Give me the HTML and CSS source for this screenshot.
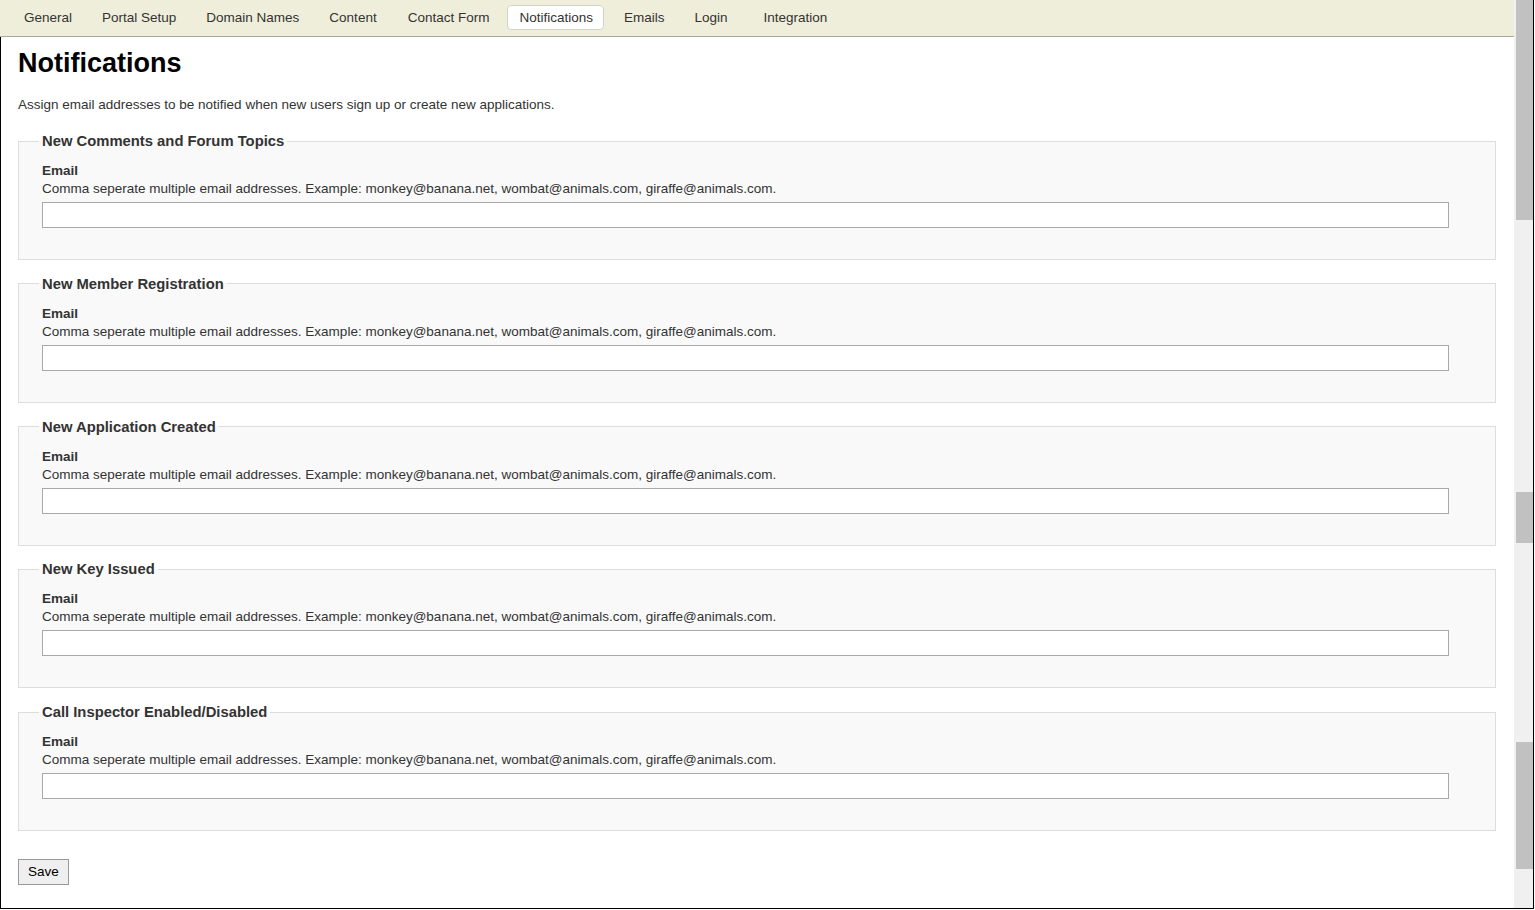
FILE: index.html
```html
<!DOCTYPE html>
<html lang="en">
<head>
<meta charset="utf-8">
<title>Notifications</title>
<link rel="stylesheet" href="styles.css">
</head>
<body>
<div class="frame">
  <div class="main">
    <nav class="tabbar">
      <ul class="tabs">
        <li class="tab">General</li>
        <li class="tab">Portal Setup</li>
        <li class="tab">Domain Names</li>
        <li class="tab">Content</li>
        <li class="tab tab-contact">Contact Form</li>
        <li class="tab tab-active">Notifications</li>
        <li class="tab">Emails</li>
        <li class="tab tab-login">Login</li>
        <li class="tab">Integration</li>
      </ul>
    </nav>
    <section class="content">
      <h1 class="title">Notifications</h1>
      <p class="intro">Assign email addresses to be notified when new users sign up or create new applications.</p>
      <form class="form">
        <fieldset class="group">
          <legend class="legend">New Comments and Forum Topics</legend>
          <label class="label" for="e1">Email</label>
          <div class="help">Comma seperate multiple email addresses. Example: monkey@banana.net, wombat@animals.com, giraffe@animals.com.</div>
          <input class="field" id="e1" type="text">
        </fieldset>
        <fieldset class="group">
          <legend class="legend">New Member Registration</legend>
          <label class="label" for="e2">Email</label>
          <div class="help">Comma seperate multiple email addresses. Example: monkey@banana.net, wombat@animals.com, giraffe@animals.com.</div>
          <input class="field" id="e2" type="text">
        </fieldset>
        <fieldset class="group">
          <legend class="legend">New Application Created</legend>
          <label class="label" for="e3">Email</label>
          <div class="help">Comma seperate multiple email addresses. Example: monkey@banana.net, wombat@animals.com, giraffe@animals.com.</div>
          <input class="field" id="e3" type="text">
        </fieldset>
        <fieldset class="group">
          <legend class="legend">New Key Issued</legend>
          <label class="label" for="e4">Email</label>
          <div class="help">Comma seperate multiple email addresses. Example: monkey@banana.net, wombat@animals.com, giraffe@animals.com.</div>
          <input class="field" id="e4" type="text">
        </fieldset>
        <fieldset class="group">
          <legend class="legend">Call Inspector Enabled/Disabled</legend>
          <label class="label" for="e5">Email</label>
          <div class="help">Comma seperate multiple email addresses. Example: monkey@banana.net, wombat@animals.com, giraffe@animals.com.</div>
          <input class="field" id="e5" type="text">
        </fieldset>
        <button class="save" type="button">Save</button>
      </form>
    </section>
  </div>
  <div class="scrollbar">
    <div class="thumb thumb-1"></div>
    <div class="thumb thumb-2"></div>
    <div class="thumb thumb-3"></div>
  </div>
</div>
</body>
</html>
```
FILE: styles.css
```css
html, body {
  margin: 0;
  padding: 0;
  background: #ffffff;
}

body {
  font-family: "Liberation Sans", Arial, sans-serif;
  color: #333333;
  overflow: hidden;
}

.frame {
  display: flex;
  width: 1534px;
  height: 909px;
  box-sizing: border-box;
  border-right: 1px solid #000000;
  border-bottom: 1px solid #000000;
}

.main {
  width: 1514px;
  display: flex;
  flex-direction: column;
}

.tabbar {
  height: 36px;
  background: #efeedb;
  border-bottom: 1px solid #a9a9a0;
  flex: none;
}

.tabs {
  list-style: none;
  margin: 0;
  padding: 5px 0 0 12px;
  display: flex;
  gap: 6px;
}

.tab {
  font-size: 13.5px;
  line-height: 16px;
  padding: 4px 11px 3px;
  border: 1px solid transparent;
  border-radius: 4px;
  color: #333333;
}

.tab-contact {
  margin-left: 1px;
}

.tab-active {
  background: #ffffff;
  border-color: #d4d3c8;
  padding: 4px 10px 3px 11px;
  margin-right: 2px;
}

.tab-login {
  margin-right: 6px;
}

.content {
  flex: 1;
  border-left: 1px solid #000000;
  padding: 0 0 0 17px;
}

.title {
  font-size: 27px;
  font-weight: bold;
  color: #000000;
  margin: 11px 0 0;
  line-height: 31px;
}

.intro {
  font-size: 13.5px;
  line-height: 16px;
  margin: 18px 0 0;
}

.form {
  margin-top: 19px;
  width: 1478px;
}

.group {
  margin: 0 0 14.75px;
  padding: 12px 0 31px 20px;
  border: 1px solid #dddddd;
  background: #f9f9f9;
  min-width: 0;
}

.legend {
  font-size: 14.8px;
  font-weight: bold;
  line-height: 18px;
  padding: 0 3px;
  color: #333333;
}

.label {
  display: block;
  font-size: 13.5px;
  font-weight: bold;
  line-height: 18px;
  margin-left: 3px;
}

.help {
  font-size: 13.5px;
  line-height: 18px;
  margin-left: 3px;
}

.field {
  display: block;
  box-sizing: border-box;
  width: 1407px;
  height: 26px;
  margin: 4px 0 0 3px;
  border: 1px solid #a9a9a9;
  background: #ffffff;
  padding: 2px 4px;
  font: inherit;
}

.save {
  margin-top: 13px;
  font-family: "Liberation Sans", Arial, sans-serif;
  font-size: 13.5px;
  color: #000000;
  background: #efefef;
  border: 1px solid #999999;
  height: 26px;
  width: 51px;
  padding: 0;
}

.scrollbar {
  width: 19px;
  background: #f0f0f0;
  position: relative;
}

.thumb {
  position: absolute;
  left: 2px;
  right: 0;
  background: #c1c1c1;
}

.thumb-1 { top: 0; height: 220px; }
.thumb-2 { top: 492px; height: 51px; }
.thumb-3 { top: 742px; height: 127px; }
```
